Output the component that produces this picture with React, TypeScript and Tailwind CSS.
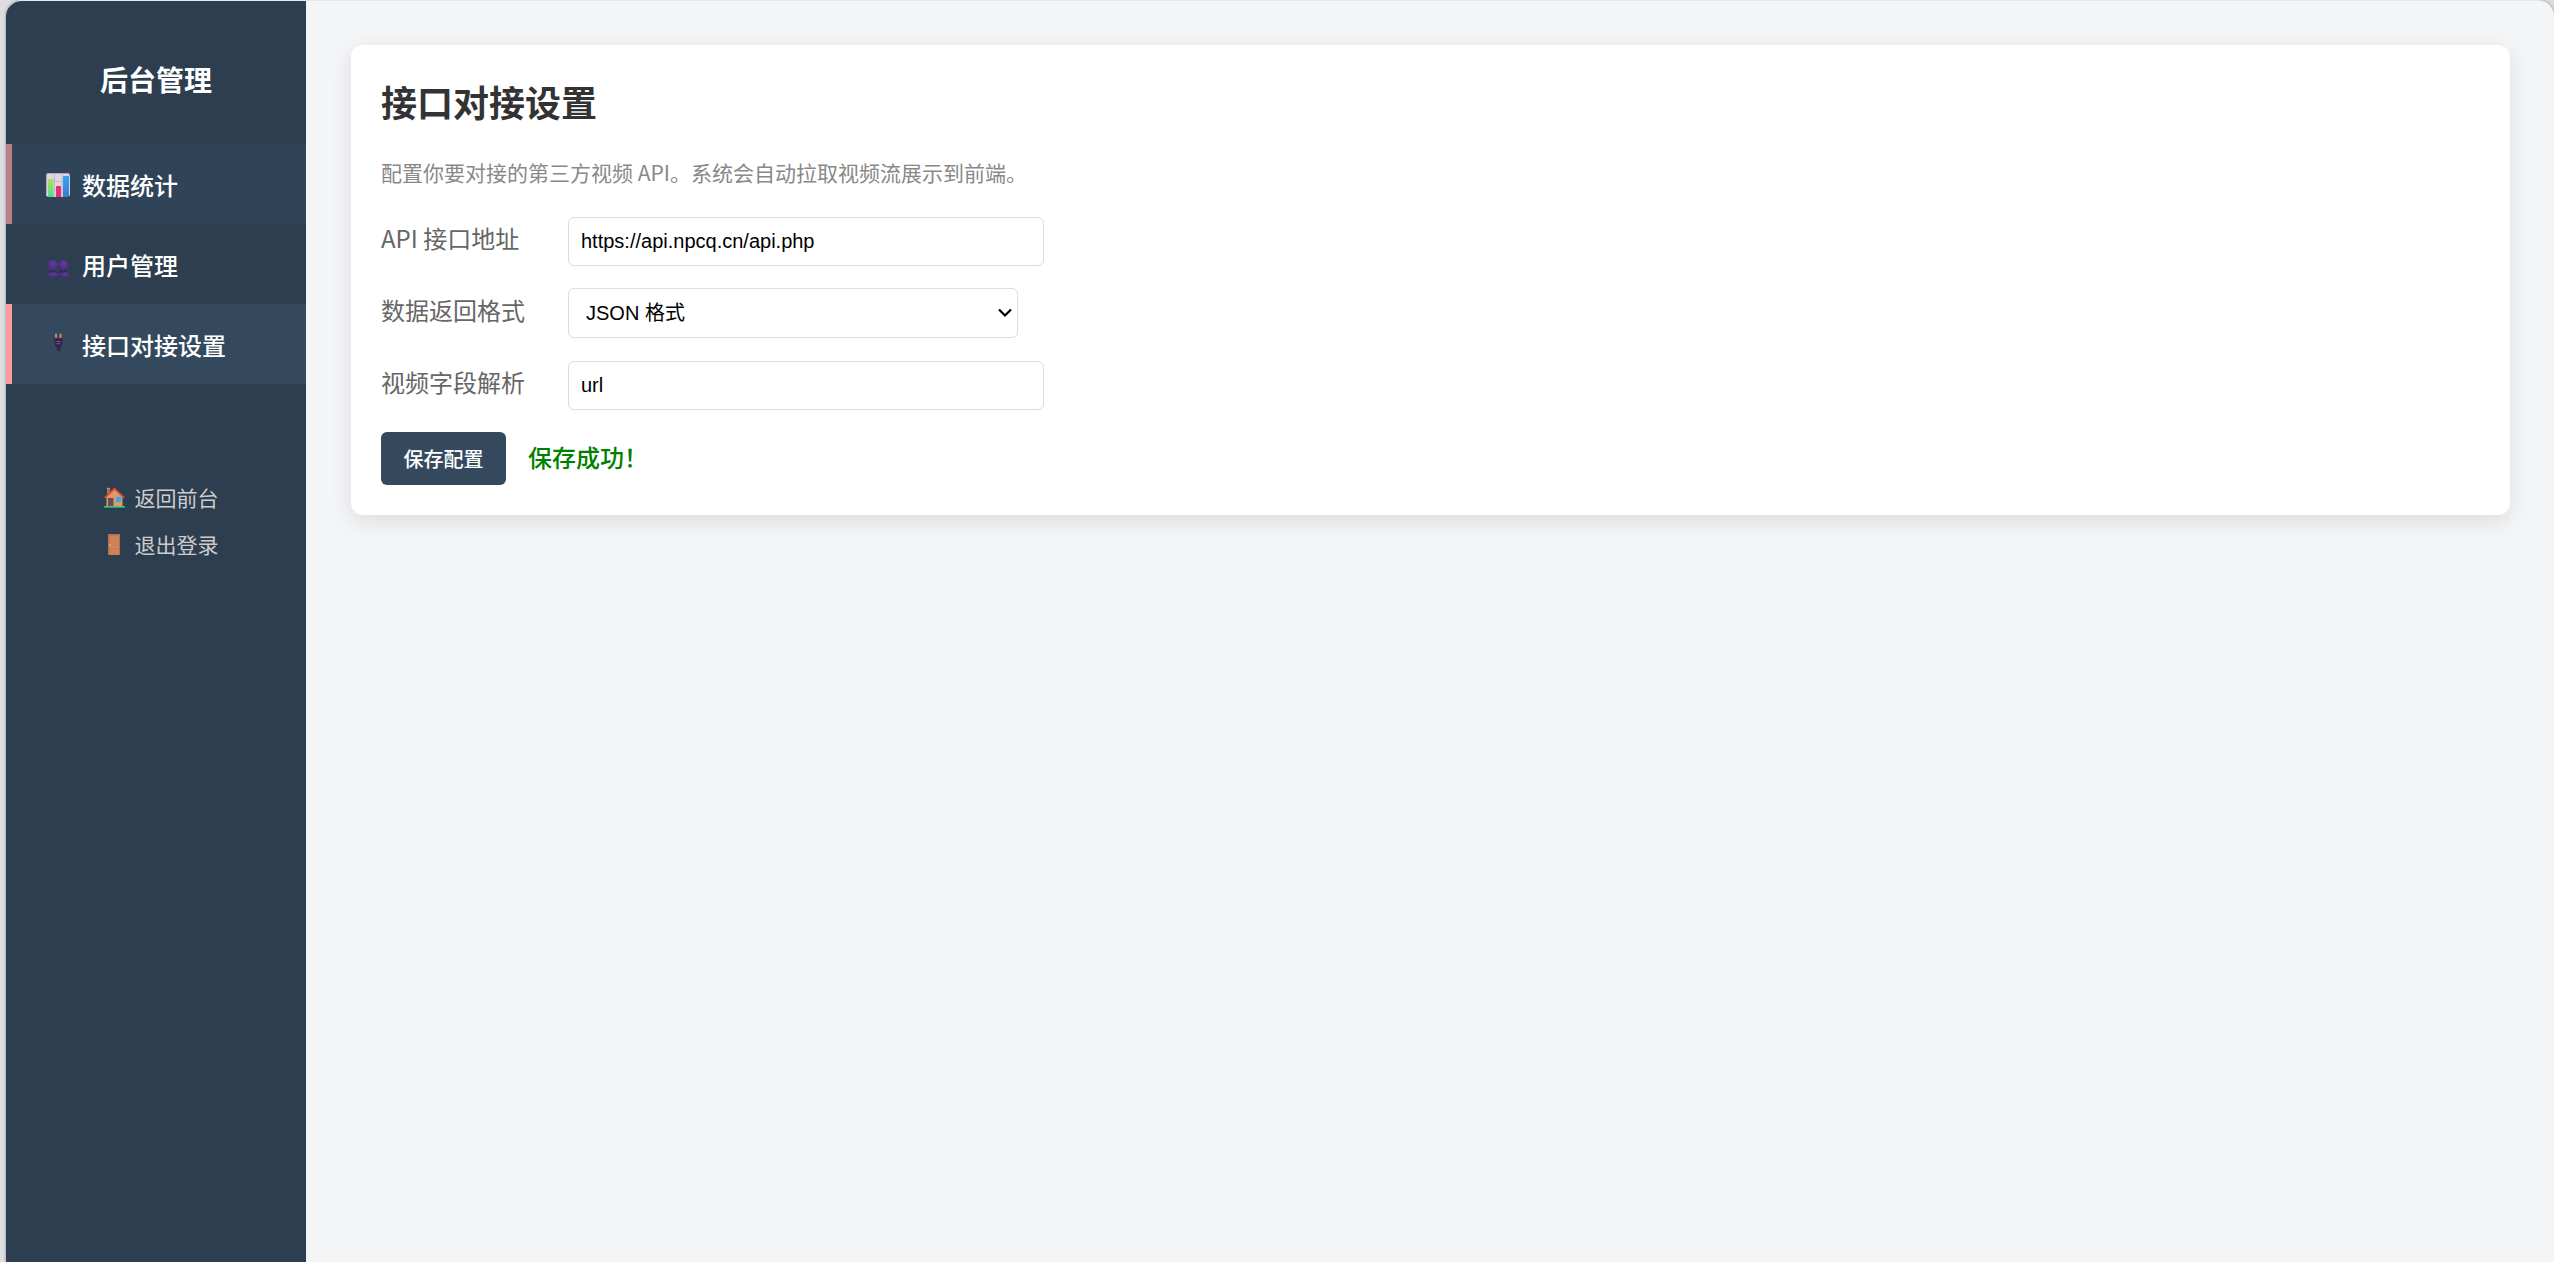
import type { FormEvent, ReactNode } from 'react';
import { useState } from 'react';

function ChartIcon() {
  return (
    <svg viewBox="0 0 24 24" className="w-6 h-6" aria-hidden="true">
      <defs>
        <linearGradient id="barGreen" x1="0" y1="0" x2="0" y2="1">
          <stop offset="0" stopColor="#b4dd5e" />
          <stop offset="1" stopColor="#4fdc8c" />
        </linearGradient>
        <linearGradient id="barBlue" x1="0" y1="0" x2="0" y2="1">
          <stop offset="0" stopColor="#2fa4f5" />
          <stop offset="1" stopColor="#3f7bd0" />
        </linearGradient>
      </defs>
      <rect x="0" y="0" width="24" height="24" rx="3" fill="#dcd6e4" />
      <path d="M8.5 0v24M16 0v24M0 8.5h24M0 16.5h24" stroke="#b9b2c2" strokeWidth="0.8" />
      <path d="M0.5 21V3Q0.5 0.5 3 0.5H21Q23.5 0.5 23.5 3" fill="none" stroke="#b3adb8" />
      <rect x="2" y="6" width="5.5" height="18" rx="0.5" fill="url(#barGreen)" />
      <rect x="10" y="13" width="5" height="11" rx="0.5" fill="#e8306f" />
      <rect x="17" y="3" width="6" height="21" rx="0.5" fill="url(#barBlue)" />
    </svg>
  );
}

function UsersIcon() {
  return (
    <svg viewBox="0 0 24 24" className="w-6 h-6" aria-hidden="true">
      <defs>
        <radialGradient id="bust" cx="0.6" cy="0.35" r="0.7">
          <stop offset="0" stopColor="#5f3f98" />
          <stop offset="1" stopColor="#452774" />
        </radialGradient>
      </defs>
      <g fill="url(#bust)">
        <ellipse cx="17.2" cy="12.3" rx="5" ry="5.6" />
        <path d="M12.6 24.5Q12.6 19 18.3 19T24 24.5z" />
        <ellipse cx="6.3" cy="12.3" rx="5.2" ry="5.6" />
        <path d="M0 24.5Q0 19 6.2 19T12.4 24.5z" />
      </g>
      <path d="M3.5 18.4q3 1.4 6 0M14 18.4q3 1.4 6 0" stroke="#2f1d55" fill="none" />
    </svg>
  );
}

function PlugIcon() {
  return (
    <svg viewBox="0 0 24 24" className="w-6 h-6" aria-hidden="true">
      <path d="M9 1Q10 0 11 1V5H9zM13.5 1Q14.5 0 15.5 1V5H13.5z" fill="#c98a55" />
      <path d="M11.5 16H13.5V24H11.5z" fill="#4c3a4c" />
      <path d="M7.5 5H17V7H16.2V11.5Q16.2 13.5 14.2 14.5V18H11V14.5Q8.7 13.5 8.7 11.5V7H7.5z" fill="#35263f" />
      <path d="M7.5 5.3H17" stroke="#503b52" strokeWidth="0.8" />
      <path d="M10.5 8.5H14.3M10.5 10.7H14.3" stroke="#7550bd" />
    </svg>
  );
}

function HouseIcon() {
  return (
    <svg viewBox="0 0 21 21" className="w-[21px] h-[21px]" aria-hidden="true">
      <path d="M3 1.5H6V8H3z" fill="#a8704f" />
      <path d="M2.8 0.8H6.2V2.3H2.8z" fill="#c98860" />
      <path d="M2.5 9.5L10.5 2L18.5 9.5V20H2.5z" fill="#d99b6d" />
      <path d="M0.7 10.8L10.5 1.6L20.3 10.8" fill="none" stroke="#e2452f" strokeWidth="1.8" strokeLinejoin="round" />
      <path d="M4 11H9.5V20H4z" fill="#704a48" />
      <path d="M12 10H17V15H12z" fill="#36a9ee" />
      <path d="M0.2 19H20.8V20.6H0.2z" fill="#3fcf6c" />
    </svg>
  );
}

function DoorIcon() {
  return (
    <svg viewBox="0 0 21 21" className="w-[21px] h-[21px]" aria-hidden="true">
      <rect x="4" y="0" width="12" height="21" rx="0.6" fill="#b86f4b" />
      <path d="M5.5 1.5H15V6.5H5.5zM5.5 8H15V13H5.5zM5.5 14.5H15V19.5H5.5z" fill="#cb8256" />
      <path d="M5.5 7H15M5.5 13.5H15M5.5 20H15" stroke="#e09a63" strokeWidth="0.8" />
      <circle cx="6" cy="11" r="0.9" fill="#e5b467" />
    </svg>
  );
}

const navItems = [
  { label: '数据统计', icon: <ChartIcon />, style: 'bg-[#304459] border-[#bd7f86]' },
  { label: '用户管理', icon: <UsersIcon />, style: 'border-transparent' },
  { label: '接口对接设置', icon: <PlugIcon />, style: 'bg-[#34495e] border-[#ff9a9e]' },
];

const field =
  'border border-[#ddd] rounded-md bg-white text-black text-xl font-["Liberation_Sans","Noto_Sans_CJK_SC",sans-serif]';

function FormRow({ id, label, children }: { id: string; label: string; children: ReactNode }) {
  return (
    <div className="flex items-center h-[50px]">
      <label htmlFor={id} className="w-[187px] shrink-0 pb-1.5 text-2xl text-[#666]">
        {label}
      </label>
      {children}
    </div>
  );
}

export default function App() {
  const [saved, setSaved] = useState(true);

  const handleSubmit = (e: FormEvent) => {
    e.preventDefault();
    setSaved(true);
  };

  return (
    <div className='min-h-screen flex pl-1.5 bg-[#dcdee2] font-["Noto_Sans_CJK_SC",sans-serif]'>
      <div className="flex flex-1 rounded-t-2xl overflow-hidden bg-[#f4f5f7] border-t border-[#e6e7ea] shadow-[0_0_3px_rgba(0,0,0,0.4)]">
        <aside className="w-[300px] shrink-0 bg-[#2c3e50] text-white">
          <h2 className="h-[143px] pt-3 flex items-center justify-center text-[28px] font-bold">后台管理</h2>
          <nav>
            {navItems.map((item) => (
              <a key={item.label} href="#" className={`flex items-center gap-3 h-20 pt-0.5 pl-[34px] border-l-6 text-2xl font-medium ${item.style}`}>
                {item.icon}
                <span>{item.label}</span>
              </a>
            ))}
          </nav>
          <div className="mt-[98px] flex flex-col items-center gap-4 text-[21px] leading-[31px] text-[#ccc]">
            <a href="#" className="flex items-center gap-2.5 pl-2.5">
              <HouseIcon />
              返回前台
            </a>
            <a href="#" className="flex items-center gap-2.5 pl-2.5">
              <DoorIcon />
              退出登录
            </a>
          </div>
        </aside>

        <main className="flex-1 pt-11 pl-[45px] pr-11">
          <form onSubmit={handleSubmit} className="bg-white rounded-xl px-[30px] pt-7 pb-[30px] shadow-[0_6px_22px_rgba(0,0,0,0.1)]">
            <h1 className="text-4xl leading-[56px] font-bold text-[#333]">接口对接设置</h1>
            <p className="mt-[27px] text-[21px] leading-8 text-[#888]">
              配置你要对接的第三方视频 API。系统会自动拉取视频流展示到前端。
            </p>
            <div className="mt-7 flex flex-col gap-[22px]">
              <FormRow id="apiUrl" label="API 接口地址">
                <input id="apiUrl" type="text" defaultValue="https://api.npcq.cn/api.php" onChange={() => setSaved(false)} className={`w-[476px] h-[49px] px-3 ${field}`} />
              </FormRow>
              <FormRow id="format" label="数据返回格式">
                <div className="relative">
                  <select id="format" className={`block appearance-none w-[450px] h-[50px] pl-[17px] pr-10 ${field}`}>
                    <option>JSON 格式</option>
                    <option>文本格式</option>
                  </select>
                  <svg viewBox="0 0 14 10" className="absolute right-1.5 top-5 w-3.5 h-2.5 pointer-events-none" aria-hidden="true">
                    <path d="M1 1.5L7 7.5L13 1.5" fill="none" stroke="#000" strokeWidth="2.2" />
                  </svg>
                </div>
              </FormRow>
              <FormRow id="videoField" label="视频字段解析">
                <input id="videoField" type="text" defaultValue="url" onChange={() => setSaved(false)} className={`w-[476px] h-[49px] px-3 ${field}`} />
              </FormRow>
              <div className="flex items-center gap-[22px]">
                <button type="submit" className="w-[125px] h-[53px] rounded-md bg-[#34495e] text-white text-xl font-medium">
                  保存配置
                </button>
                {saved && <span className="pb-1 text-2xl font-medium text-[#008000]">保存成功！</span>}
              </div>
            </div>
          </form>
        </main>
      </div>
    </div>
  );
}
